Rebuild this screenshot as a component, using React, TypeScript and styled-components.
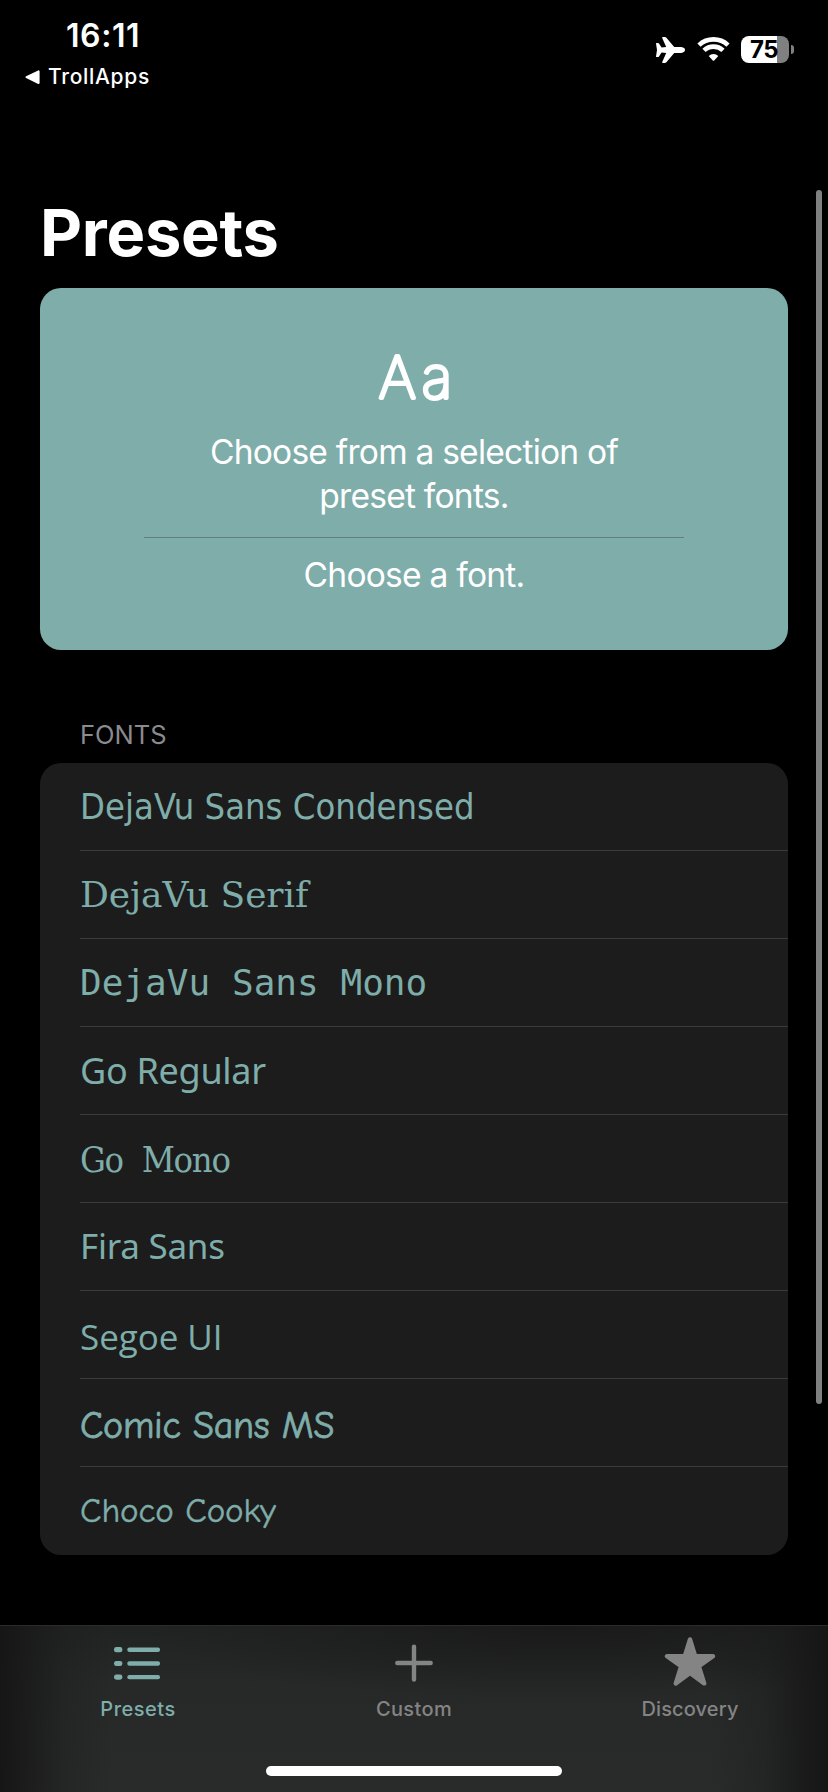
import React from 'react';
import styled, { createGlobalStyle } from 'styled-components';

const ACCENT = '#7eadaa';
const MUTED = '#848484';

const GlobalStyle = createGlobalStyle`
  * { box-sizing: border-box; }
  body {
    margin: 0;
    background: #000;
    color: #fff;
    font-family: Inter, "Liberation Sans", sans-serif;
    overflow: hidden;
  }
`;

const Screen = styled.div`
  position: relative;
  display: flex;
  flex-direction: column;
  width: 828px;
  height: 1792px;
  background: #000;
`;

const StatusBar = styled.header`
  display: flex;
  justify-content: space-between;
  height: 190px;
  padding: 17px 34px 0 25px;
`;

const StatusLeft = styled.div`
  display: flex;
  flex-direction: column;
  gap: 9px;
`;

const Clock = styled.div`
  padding-left: 41px;
  font-size: 32px;
  font-weight: 600;
  line-height: 38px;
  letter-spacing: 0.57px;
`;

const BackLink = styled.div`
  display: flex;
  align-items: center;
  gap: 8px;
  font-size: 21px;
  font-weight: 450;
  line-height: 26px;
  letter-spacing: 0.7px;
`;

const StatusRight = styled.div`
  display: flex;
  align-items: flex-start;
  padding-top: 19px;
`;

const Plane = styled.svg`
  margin: 1px 12px 0 0;
`;

const Wifi = styled.svg`
  margin-right: 11px;
`;

const Battery = styled.div`
  display: flex;
  align-items: center;
  justify-content: center;
  width: 48px;
  height: 27px;
  padding-right: 2px;
  border-radius: 8px;
  background: linear-gradient(to right, #fff 36px, #808080 36px);
  color: #000;
  font-size: 24px;
  font-weight: 700;
  line-height: 28px;
  letter-spacing: -0.5px;
`;

const BatteryCap = styled.div`
  width: 3px;
  height: 9px;
  margin: 9px 0 0 2px;
  border-radius: 0 4px 4px 0;
  background: #808080;
`;

const Content = styled.main`
  display: flex;
  flex-direction: column;
  flex: 1;
  padding: 0 40px;
`;

const Title = styled.h1`
  margin: 0;
  height: 98px;
  font-size: 65px;
  font-weight: 700;
  line-height: 85px;
  letter-spacing: -0.28px;
`;

const Hero = styled.section`
  display: flex;
  flex-direction: column;
  align-items: center;
  height: 362px;
  padding: 52px 104px 0;
  border-radius: 21px;
  background: ${ACCENT};
`;

const HeroText = styled.p`
  margin: 0;
  font-size: 33.6px;
  line-height: 44px;
  letter-spacing: -0.78px;
  text-align: center;
`;

const HeroRule = styled.hr`
  width: 540px;
  height: 1px;
  margin: 19px 0 15px;
  border: 0;
  background: #637c7d;
`;

const SectionLabel = styled.h2`
  margin: 0;
  height: 113px;
  padding: 69px 0 0 40px;
  color: #8a8a8f;
  font-size: 25.5px;
  font-weight: 400;
  line-height: 32px;
  letter-spacing: 0;
`;

const FontList = styled.ul`
  margin: 0;
  padding: 0 0 0 40px;
  list-style: none;
  border-radius: 21px;
  background: #1c1c1c;
`;

interface FontSpec {
  name: string;
  family: string;
  size: number;
  line: number;
  tracking: number;
  word?: number;
  outline?: number;
}

const FontRow = styled.li<{ $spec: FontSpec }>`
  height: 88px;
  color: ${ACCENT};
  font-family: ${({ $spec }) => $spec.family};
  font-size: ${({ $spec }) => $spec.size}px;
  line-height: ${({ $spec }) => $spec.line}px;
  letter-spacing: ${({ $spec }) => $spec.tracking}px;
  word-spacing: ${({ $spec }) => $spec.word ?? 0}px;
  -webkit-text-stroke: ${({ $spec }) => $spec.outline ?? 0}px ${ACCENT};
  white-space: nowrap;
  background: linear-gradient(#3b3b3d, #3b3b3d) 0 87px / 100% 1px no-repeat;

  &:last-child {
    background: none;
  }
`;

const ScrollThumb = styled.div`
  position: absolute;
  top: 190px;
  right: 6px;
  width: 6px;
  height: 1214px;
  border-radius: 3px;
  background: #808080;
`;

const TabBar = styled.nav`
  display: flex;
  flex-direction: column;
  align-items: center;
  height: 167px;
  border-top: 1px solid #2b2b2b;
  background:
    linear-gradient(to right, #161616 0, rgba(24, 24, 24, 0.8) 25px, rgba(24, 24, 24, 0.25) 65px, rgba(24, 24, 24, 0) 110px, rgba(24, 24, 24, 0) 710px, rgba(24, 24, 24, 0.3) 765px, rgba(24, 24, 24, 0.85) 803px, #161616 828px),
    radial-gradient(ellipse 420px 75px at 560px 0, rgba(25, 25, 25, 0.9), rgba(25, 25, 25, 0)),
    linear-gradient(to bottom, #212322 0, #272828 60px, #292a2a 167px);
`;

const Tabs = styled.div`
  display: grid;
  grid-template-columns: repeat(3, 276px);
  height: 140px;
`;

const Tab = styled.div<{ $active?: boolean }>`
  display: flex;
  flex-direction: column;
  align-items: center;
  padding-top: 8px;
  color: ${({ $active }) => ($active ? ACCENT : MUTED)};
`;

const TabLabel = styled.span<{ $tracking: number }>`
  margin-top: 11px;
  font-size: 20px;
  font-weight: 450;
  line-height: 24px;
  letter-spacing: ${({ $tracking }) => $tracking}px;
`;

const HomeIndicator = styled.div`
  width: 296px;
  height: 10px;
  border-radius: 5px;
  background: #fff;
`;

const fonts: FontSpec[] = [
  { name: 'DejaVu Sans Condensed', family: '"DejaVu Sans Condensed", "DejaVu Sans", sans-serif', size: 36, line: 87, tracking: 0.04 },
  { name: 'DejaVu Serif', family: '"DejaVu Serif", serif', size: 36, line: 87, tracking: -0.08 },
  { name: 'DejaVu Sans Mono', family: '"DejaVu Sans Mono", monospace', size: 36, line: 87, tracking: 0.03 },
  { name: 'Go Regular', family: '"Noto Sans", sans-serif', size: 36, line: 88, tracking: -0.3 },
  { name: 'Go Mono', family: '"DejaVu Serif Condensed", "DejaVu Serif", serif', size: 36, line: 89, tracking: -1.3, word: 10 },
  { name: 'Fira Sans', family: '"Noto Sans", sans-serif', size: 35, line: 85, tracking: -0.25 },
  { name: 'Segoe UI', family: '"Open Sans", sans-serif', size: 35, line: 91, tracking: -0.05 },
  { name: 'Comic Sans MS', family: '"Comic Neue", "Open Sans", sans-serif', size: 38, line: 94, tracking: -0.25, outline: 0.8 },
  { name: 'Choco Cooky', family: '"Comic Neue", "Open Sans", sans-serif', size: 35, line: 88, tracking: -0.1, outline: 0.4 },
];

const ListIcon = () => (
  <svg width="50" height="52" viewBox="1 0 50 52" fill="currentColor">
    {[13.2, 27, 40.6].map(y => (
      <g key={y}>
        <rect x="2" y={y - 0.1} width="8.4" height="5.2" rx="2.4" />
        <rect x="15.3" y={y + 0.3} width="32.7" height="4.4" rx="2" />
      </g>
    ))}
  </svg>
);

const PlusIcon = () => (
  <svg width="50" height="52" viewBox="0 0 50 52" fill="none" stroke="currentColor" strokeWidth="4.4" strokeLinecap="round">
    <path d="M8.3 29H41.7M25 12.6V45.6" />
  </svg>
);

const StarIcon = () => (
  <svg width="54" height="52" viewBox="0 0 54 52" fill="currentColor" stroke="currentColor" strokeWidth="4.4" strokeLinejoin="round">
    <path d="M27 5.4L32.2 22.2H50L35.9 32.3L41.2 49.4L27 39L12.8 49.4L18.1 32.3L4 22.2H21.8Z" />
  </svg>
);

export default function App() {
  return (
    <Screen>
      <GlobalStyle />
      <StatusBar>
        <StatusLeft>
          <Clock>16:11</Clock>
          <BackLink>
            <svg width="15" height="16" viewBox="0 0 15 16" fill="#fff" stroke="#fff" strokeWidth="2" strokeLinejoin="round">
              <path d="M1.5 8.2L13.6 2.4V14Z" />
            </svg>
            TrollApps
          </BackLink>
        </StatusLeft>
        <StatusRight>
          <Plane width="29" height="26" viewBox="0 0 29 26" fill="#fff">
            <path d="M0 6.6Q0 6 .6 6H2Q2.6 6 3 6.5L5.6 10.4L10.2 10.1L6.2 1Q5.9 0 7 0H8.8Q9.7 0 10.4.8L18.2 10.1H25.3Q29 10.7 29 13Q29 15.3 25.3 15.9H18.2L10.4 25.2Q9.7 26 8.8 26H7Q5.9 26 6.2 25L10.2 15.9L5.6 15.6L3 19.5Q2.6 20 2 20H.6Q0 20 0 19.4L1 13Z" />
          </Plane>
          <Wifi width="33" height="26" viewBox="0 0 33 26" fill="none" stroke="#fff" strokeWidth="4.7">
            <path d="M2 9.1A21.3 21.3 0 0 1 31 9.1" />
            <path d="M7 14.4A13.9 13.9 0 0 1 26 14.4" />
            <path d="M11.7 19.9A7 7 0 0 1 21.3 19.9L17.2 24.4Q16.5 25 15.8 24.4Z" fill="#fff" stroke="none" />
          </Wifi>
          <Battery>75</Battery>
          <BatteryCap />
        </StatusRight>
      </StatusBar>

      <Content>
        <Title>Presets</Title>
        <Hero>
          <svg width="100" height="90" viewBox="0 0 100 90">
            <text
              x="54.5"
              y="58.4"
              textAnchor="middle"
              fontFamily="Inter, sans-serif"
              fontSize="58"
              fontWeight="100"
              letterSpacing="6"
              fill="#fff"
              stroke="#fff"
              strokeWidth="4"
              strokeLinejoin="round"
            >
              Aa
            </text>
          </svg>
          <HeroText>
            Choose from a selection of
            <br />
            preset fonts.
          </HeroText>
          <HeroRule />
          <HeroText>Choose a font.</HeroText>
        </Hero>

        <SectionLabel>FONTS</SectionLabel>
        <FontList>
          {fonts.map(spec => (
            <FontRow key={spec.name} $spec={spec}>{spec.name}</FontRow>
          ))}
        </FontList>
      </Content>

      <TabBar>
        <Tabs>
          <Tab $active>
            <ListIcon />
            <TabLabel $tracking={0.5}>Presets</TabLabel>
          </Tab>
          <Tab>
            <PlusIcon />
            <TabLabel $tracking={0.38}>Custom</TabLabel>
          </Tab>
          <Tab>
            <StarIcon />
            <TabLabel $tracking={0.15}>Discovery</TabLabel>
          </Tab>
        </Tabs>
        <HomeIndicator />
      </TabBar>
      <ScrollThumb />
    </Screen>
  );
}
